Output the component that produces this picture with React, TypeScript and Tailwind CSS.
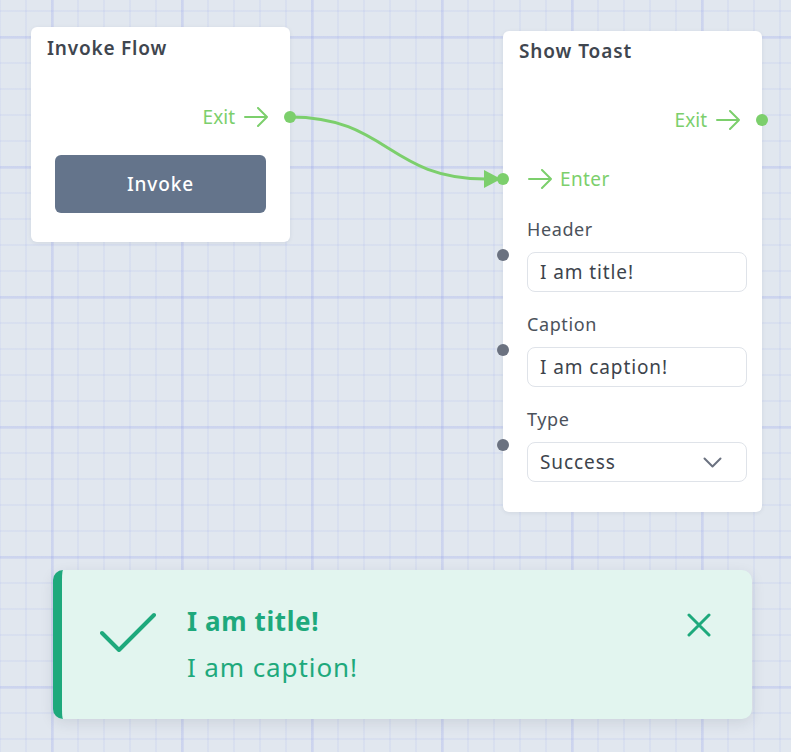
import React from 'react';

// ─── ICONS ───

function ArrowRight() {
  return (
    <svg width="24" height="20" viewBox="0 0 24 20" fill="none" stroke="currentColor" strokeWidth="2" strokeLinecap="round" strokeLinejoin="round">
      <path d="M1 10H23M14 1L23 10L14 19" />
    </svg>
  );
}

function Chevron() {
  return (
    <svg width="19" height="11" viewBox="0 0 19 11" fill="none" stroke="#6b7280" strokeWidth="2" strokeLinecap="round" strokeLinejoin="round">
      <path d="M1.5 1.5L9.5 9.5L17.5 1.5" />
    </svg>
  );
}

function Dot({ color = 'bg-[#6b7280]', className = '' }: { color?: string; className?: string }) {
  return <span className={`absolute w-3 h-3 rounded-full ${color} ${className}`} />;
}

// ─── PIECES ───

function Field({ label, value, select, first }: { label: string; value: string; select?: boolean; first?: boolean }) {
  return (
    <div className={`flex flex-col ${first ? 'mt-[26px]' : 'mt-5'}`}>
      <div className="pl-6 text-[18px] leading-6 tracking-[0.6px] text-[#4b525b]">{label}</div>
      <div className="relative mt-[11px] pl-6 pr-[15px]">
        <Dot className="left-[-6px] top-[-3px]" />
        <div className="h-10 rounded-lg border border-[#dfe3e9] pl-3 pr-6 flex items-center justify-between text-[19px] tracking-[0.9px] text-[#3d444c]">
          <span>{value}</span>
          {select && <Chevron />}
        </div>
      </div>
    </div>
  );
}

// ─── APP ───

export default function App() {
  return (
    <div
      className="relative w-[791px] h-[752px] overflow-hidden bg-[#e1e7ef] font-['Noto_Sans','Open_Sans',sans-serif]
        bg-[image:linear-gradient(to_right,rgba(150,160,235,0.18)_3px,transparent_3px),linear-gradient(to_bottom,rgba(150,160,235,0.18)_3px,transparent_3px),linear-gradient(to_right,rgba(150,160,235,0.11)_2px,transparent_2px),linear-gradient(to_bottom,rgba(150,160,235,0.11)_2px,transparent_2px)]
        bg-[size:130px_130px,130px_130px,26px_26px,26px_26px]
        bg-[position:51px_36px,51px_36px,-1px_10px,-1px_10px]"
    >
      {/* edge */}
      <svg className="absolute left-0 top-0" width="791" height="752">
        <path d="M290 117 C 388 117, 388 179, 486 179" fill="none" stroke="#7ccf6c" strokeWidth="3" />
        <polygon points="484,170 501,179 484,188" fill="#7ccf6c" />
      </svg>

      {/* Invoke Flow node */}
      <div className="absolute left-[31px] top-[27px] w-[259px] h-[215px] bg-white rounded-md shadow-[0_1px_4px_rgba(30,41,59,0.08)] flex flex-col">
        <div className="pl-4 pt-[9px] text-[19px] leading-6 font-semibold tracking-[0.8px] text-[#3f464f]">Invoke Flow</div>
        <div className="relative mt-[45px] h-6 pr-[22px] flex items-center justify-end gap-[9px] text-[19px] text-[#7ccf6c]">
          <span>Exit</span>
          <ArrowRight />
          <Dot color="bg-[#7ccf6c]" className="right-[-6px] top-1/2 -translate-y-1/2" />
        </div>
        <button className="mx-6 mt-[26px] h-[58px] rounded-md bg-[#64748b] text-white text-[19px] font-medium tracking-[0.9px]">
          Invoke
        </button>
      </div>

      {/* Show Toast node */}
      <div className="absolute left-[503px] top-[31px] w-[259px] h-[481px] bg-white rounded-md shadow-[0_1px_4px_rgba(30,41,59,0.08)] flex flex-col">
        <div className="pl-4 pt-2 text-[19px] leading-6 font-semibold tracking-[0.9px] text-[#3f464f]">Show Toast</div>
        <div className="relative mt-[45px] h-6 pr-[22px] flex items-center justify-end gap-[9px] text-[19px] text-[#7ccf6c]">
          <span>Exit</span>
          <ArrowRight />
          <Dot color="bg-[#7ccf6c]" className="right-[-6px] top-1/2 -translate-y-1/2" />
        </div>
        <div className="relative mt-[35px] h-6 pl-[25px] flex items-center gap-2 text-[19px] tracking-[0.4px] text-[#7ccf6c]">
          <Dot color="bg-[#7ccf6c]" className="left-[-6px] top-1/2 -translate-y-1/2" />
          <ArrowRight />
          <span>Enter</span>
        </div>
        <Field first label="Header" value="I am title!" />
        <Field label="Caption" value="I am caption!" />
        <Field label="Type" value="Success" select />
      </div>

      {/* Toast */}
      <div className="absolute left-[53px] top-[570px] w-[699px] h-[149px] rounded-[10px] border-l-[9px] border-[#1ea97c] bg-[#e2f5ef] shadow-[0_4px_14px_rgba(30,41,59,0.1)] flex items-start pt-[35px] text-[#1ea97c]">
        <svg className="ml-[38px] mt-[7px] shrink-0" width="56" height="40" viewBox="0 0 56 40" fill="none" stroke="#1ea97c" strokeWidth="4" strokeLinecap="round" strokeLinejoin="round">
          <polyline points="2,21 19,38 54,3" />
        </svg>
        <div className="ml-[31px] flex-1 flex flex-col">
          <div className="text-[26px] leading-8 font-bold tracking-[0.6px]">I am title!</div>
          <div className="mt-[14px] text-[26px] leading-8 tracking-[0.9px]">I am caption!</div>
        </div>
        <svg className="mt-2 mr-[41px] shrink-0" width="24" height="24" viewBox="0 0 24 24" fill="none" stroke="#1ea97c" strokeWidth="3" strokeLinecap="round">
          <path d="M2 2L22 22M22 2L2 22" />
        </svg>
      </div>
    </div>
  );
}
